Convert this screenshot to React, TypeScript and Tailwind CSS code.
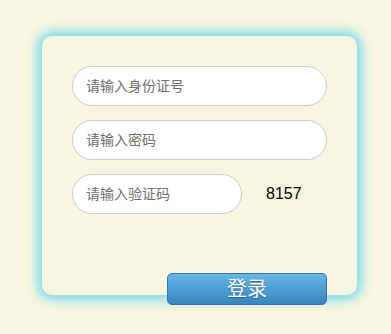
export default function App() {
  return (
    <div className="h-[334px] w-[391px] bg-[#f8f6e0] pl-[42px] pt-[36px] font-['Liberation_Sans','Noto_Sans_CJK_SC',sans-serif]">
      <div className="flex h-[259px] w-[315px] flex-col rounded-[10px] bg-[#f8f6e0] px-[30px] pt-[30px] shadow-[0_0_12px_4px_rgba(110,215,240,1)]">
        <div className="flex flex-col gap-[14px]">
          <Field placeholder="请输入身份证号" />
          <Field placeholder="请输入密码" />
          <div className="flex items-center">
            <Field placeholder="请输入验证码" className="w-[170px]" />
            <span className="ml-[24px] text-[16px] text-black">8157</span>
          </div>
        </div>
        <button className="mt-[59px] h-[40px] w-[160px] self-end rounded-[5px] border border-[#2f78aa] bg-gradient-to-b from-[#66b6e6] to-[#3884bd] text-[20px] text-white [text-shadow:0_1px_1px_rgba(0,0,0,0.35)]">
          登录
        </button>
      </div>
    </div>
  );
}

function Field({ placeholder, className = "w-full" }: { placeholder: string; className?: string }) {
  return (
    <input
      placeholder={placeholder}
      className={`${className} h-[40px] rounded-full border border-[#cccccc] bg-white px-[13px] text-[14px] text-[#333] outline-none placeholder:text-[#6f6f6f]`}
    />
  );
}
